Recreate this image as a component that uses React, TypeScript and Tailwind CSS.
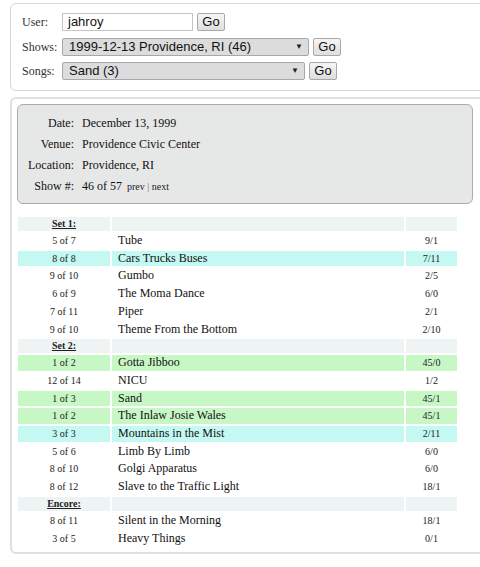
import React from "react";

type Row =
  | { kind: "set"; label: string }
  | { kind: "song"; pos: string; title: string; stat: string; hl?: "cyan" | "green" };

const rows: Row[] = [
  { kind: "set", label: "Set 1:" },
  { kind: "song", pos: "5 of 7", title: "Tube", stat: "9/1" },
  { kind: "song", pos: "8 of 8", title: "Cars Trucks Buses", stat: "7/11", hl: "cyan" },
  { kind: "song", pos: "9 of 10", title: "Gumbo", stat: "2/5" },
  { kind: "song", pos: "6 of 9", title: "The Moma Dance", stat: "6/0" },
  { kind: "song", pos: "7 of 11", title: "Piper", stat: "2/1" },
  { kind: "song", pos: "9 of 10", title: "Theme From the Bottom", stat: "2/10" },
  { kind: "set", label: "Set 2:" },
  { kind: "song", pos: "1 of 2", title: "Gotta Jibboo", stat: "45/0", hl: "green" },
  { kind: "song", pos: "12 of 14", title: "NICU", stat: "1/2" },
  { kind: "song", pos: "1 of 3", title: "Sand", stat: "45/1", hl: "green" },
  { kind: "song", pos: "1 of 2", title: "The Inlaw Josie Wales", stat: "45/1", hl: "green" },
  { kind: "song", pos: "3 of 3", title: "Mountains in the Mist", stat: "2/11", hl: "cyan" },
  { kind: "song", pos: "5 of 6", title: "Limb By Limb", stat: "6/0" },
  { kind: "song", pos: "8 of 10", title: "Golgi Apparatus", stat: "6/0" },
  { kind: "song", pos: "8 of 12", title: "Slave to the Traffic Light", stat: "18/1" },
  { kind: "set", label: "Encore:" },
  { kind: "song", pos: "8 of 11", title: "Silent in the Morning", stat: "18/1" },
  { kind: "song", pos: "3 of 5", title: "Heavy Things", stat: "0/1" },
];

const serif = "font-['Liberation_Serif','Times_New_Roman',serif]";
const sans = "font-['Liberation_Sans',Arial,sans-serif]";

function GoButton() {
  return (
    <div
      className={`${sans} h-[18px] w-[28px] flex items-center justify-center text-[13px] text-[#111] border border-[#a8a8a8] rounded-[2px] bg-gradient-to-b from-[#f6f6f6] to-[#dedede]`}
    >
      Go
    </div>
  );
}

function Select({ text, width }: { text: string; width: string }) {
  return (
    <div
      className={`${sans} ${width} h-[18px] flex items-center justify-between pl-[6px] pr-[5px] text-[13px] text-[#111] border border-[#a8a8a8] rounded-[2px] bg-[#dcdcdc]`}
    >
      <span>{text}</span>
      <span className="text-[8px] text-[#222]">▼</span>
    </div>
  );
}

export default function App() {
  return (
    <div className={`w-[480px] h-[567px] overflow-hidden bg-white ${serif}`}>
      {/* top form panel */}
      <div className="ml-[10px] mt-[3px] w-[480px] h-[88px] border border-[#d6d6d6] rounded-[6px] pl-[11px] pt-[9px] flex flex-col gap-[6px]">
        <div className="flex items-center">
          <div className="w-[40px] text-[12px] text-[#333]">User:</div>
          <div className={`${sans} w-[131px] h-[18px] border border-[#c4c4c4] pl-[5px] text-[13px] leading-[16px] text-[#111]`}>
            jahroy
          </div>
          <div className="ml-[4px]">
            <GoButton />
          </div>
        </div>
        <div className="flex items-center mt-[1px]">
          <div className="w-[40px] text-[12px] text-[#333]">Shows:</div>
          <Select text="1999-12-13 Providence, RI (46)" width="w-[247px]" />
          <div className="ml-[4px]">
            <GoButton />
          </div>
        </div>
        <div className="flex items-center">
          <div className="w-[40px] text-[12px] text-[#333]">Songs:</div>
          <Select text="Sand (3)" width="w-[243px]" />
          <div className="ml-[4px]">
            <GoButton />
          </div>
        </div>
      </div>

      {/* show panel */}
      <div className="ml-[10px] mt-[6px] w-[480px] h-[457px] border-2 border-[#e0e0e0] rounded-[6px] pl-[5px] pt-[5px]">
        <div className="w-[456px] h-[100px] bg-[#e6e7e7] border border-[#acacac] rounded-[6px] pt-[7px] text-[12px] text-[#111]">
          {[
            ["Date:", "December 13, 1999"],
            ["Venue:", "Providence Civic Center"],
            ["Location:", "Providence, RI"],
          ].map(([l, v]) => (
            <div key={l} className="flex items-center h-[21px]">
              <div className="w-[56px] text-right">{l}</div>
              <div className="ml-[8px]">{v}</div>
            </div>
          ))}
          <div className="flex items-center h-[21px]">
            <div className="w-[56px] text-right">Show #:</div>
            <div className="ml-[8px]">46 of 57</div>
            <div className="ml-[5px] text-[10px] text-[#222] pt-[2px]">
              prev <span className="text-[#666]">|</span> next
            </div>
          </div>
        </div>

        <table className="mt-[11px] ml-[-1px] border-separate border-spacing-[2px] table-fixed w-[443px]">
          <colgroup>
            <col className="w-[92px]" />
            <col className="w-[292px]" />
            <col className="w-[51px]" />
          </colgroup>
          <tbody>
            {rows.map((r, i) => {
              if (r.kind === "set") {
                return (
                  <tr key={i}>
                    <td className="h-[14px] p-0 bg-[#eef4f4] text-center text-[10px] font-bold underline text-[#222] leading-[14px]">
                      {r.label}
                    </td>
                    <td className="h-[14px] p-0 bg-[#eef4f4]" />
                    <td className="h-[14px] p-0 bg-[#eef4f4]" />
                  </tr>
                );
              }
              const bg =
                r.hl === "cyan" ? "bg-[#c4f8f2]" : r.hl === "green" ? "bg-[#c8f7c6]" : "bg-white";
              return (
                <tr key={i}>
                  <td className={`h-[15.7px] p-0 ${bg} text-center text-[10px] text-[#222] align-baseline leading-[15.7px]`}>
                    {r.pos}
                  </td>
                  <td className={`h-[15.7px] p-0 pl-[6px] ${bg} text-[12px] text-[#111] align-baseline leading-[15.7px] whitespace-nowrap`}>
                    {r.title}
                  </td>
                  <td className={`h-[15.7px] p-0 ${bg} text-center text-[10px] text-[#222] align-baseline leading-[15.7px]`}>
                    {r.stat}
                  </td>
                </tr>
              );
            })}
          </tbody>
        </table>
      </div>
    </div>
  );
}
